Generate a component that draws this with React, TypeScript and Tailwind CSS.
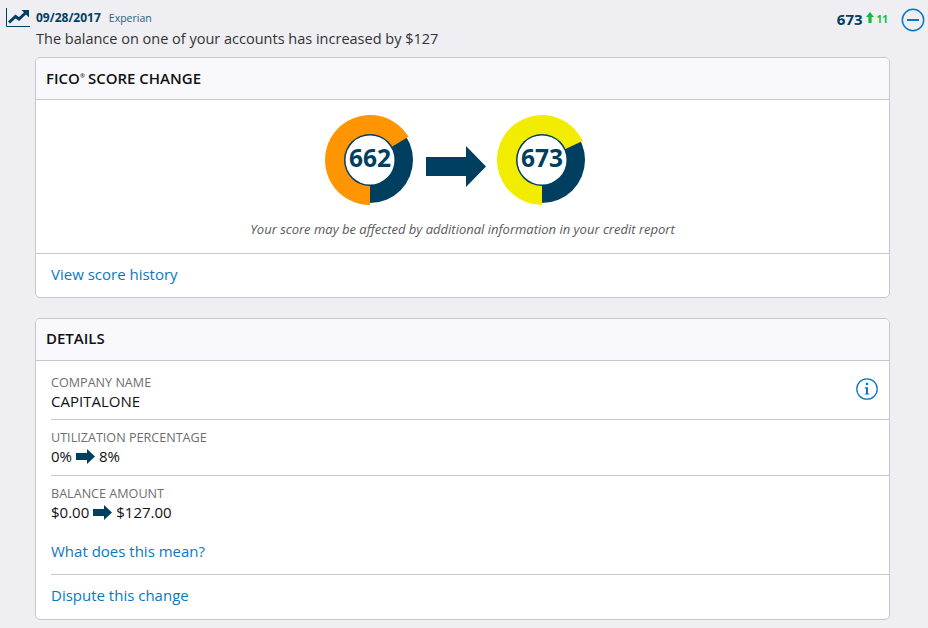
import React from "react";

function Donut({ score, color, angle }: { score: string; color: string; angle: number }) {
  const rad = (angle * Math.PI) / 180;
  const x = 45 + 45 * Math.sin(rad);
  const y = 45 - 45 * Math.cos(rad);
  const nx = 45 + 43 * Math.sin(rad);
  const ny = 45 - 43 * Math.cos(rad);
  return (
    <div className="grid w-[90px] h-[90px]">
      <svg viewBox="0 0 90 90" className="col-start-1 row-start-1 w-[90px] h-[90px]">
        <path d={`M45 45 L45 2 A43 43 0 1 1 45 88 Z`} fill="#003f5f" />
        <path d={`M45 45 L45 90 A45 45 0 1 1 ${x} ${y} L${nx} ${ny} Z`} fill={color} />
        <circle cx="45" cy="45" r="26" fill="#003f5f" />
        <circle cx="45" cy="45" r="24.5" fill="#fff" />
      </svg>
      <div className="col-start-1 row-start-1 flex items-center justify-center pb-[3px] text-[24.5px] font-bold text-[#003f5f] leading-none">
        {score}
      </div>
    </div>
  );
}

function BigArrow() {
  return (
    <svg width="60" height="41" viewBox="0 0 60 41" className="mt-[31px] ml-[-1px] mr-[-1px]">
      <path d="M0 11 H40 V0 L60 20.5 L40 41 V30 H0 Z" fill="#003f5f" />
    </svg>
  );
}

function SmallArrow() {
  return (
    <svg width="19" height="15" viewBox="0 0 19 15" className="mx-[4px]">
      <path d="M0 4 H11 V0 L19 7.5 L11 15 V11 H0 Z" fill="#003f5f" />
    </svg>
  );
}

function Field({ label, children }: { label: string; children: React.ReactNode }) {
  return (
    <div>
      <div className="text-[12.6px] leading-[17px] text-[#6d6e71]">{label}</div>
      <div className="mt-[1px] flex items-center text-[15px] leading-[19px] text-[#111]">{children}</div>
    </div>
  );
}

export default function App() {
  return (
    <div
      className="h-[628px] w-[928px] overflow-hidden bg-[#eeeef3] text-[#222]"
      style={{ fontFamily: '"Open Sans", sans-serif' }}
    >
      <div className="flex justify-between pl-[6px] pr-[3px] pt-[8px]">
        <div className="flex">
          <svg width="25" height="19" viewBox="0 0 25 19">
            <path d="M0.5 0 V18.5 H24" fill="none" stroke="#003f5f" strokeWidth="1" />
            <path d="M3 14.5 L9.5 8.5 L13 11 L20 4.5" fill="none" stroke="#003f5f" strokeWidth="3" />
            <path d="M15.5 2 H23 V9.5 Z" fill="#003f5f" />
          </svg>
          <div className="ml-[5px]">
            <div className="mt-[1px] flex items-baseline text-[#003f5f] leading-[18px]">
              <span className="text-[12px] font-bold">09/28/2017</span>
              <span className="ml-[8px] text-[10.5px] text-[#2b607c]">Experian</span>
            </div>
            <div className="text-[14.5px] leading-[22px] mt-[1px] text-[#333]">
              The balance on one of your accounts has increased by $127
            </div>
          </div>
        </div>
        <div className="flex items-start">
          <span className="mt-[1px] text-[15px] font-bold text-[#003f5f] leading-[20px]">673</span>
          <svg width="8" height="11" viewBox="0 0 8 11" className="ml-[3px] mt-[4px]">
            <path d="M4 0 L8 5 H5.6 V11 H2.4 V5 H0 Z" fill="#0fbf3c" />
          </svg>
          <span className="mt-[1px] ml-[3px] text-[10px] font-bold text-[#0fbf3c] leading-[20px]">11</span>
          <svg width="24" height="24" viewBox="0 0 24 24" className="ml-[13px]">
            <circle cx="12" cy="12" r="10.7" fill="none" stroke="#0a78c2" strokeWidth="1.5" />
            <path d="M6 12 H18" stroke="#0a78c2" strokeWidth="2" />
          </svg>
        </div>
      </div>

      <div className="ml-[35px] mt-[7px] w-[855px]">
        <section className="h-[241px] rounded-[5px] border border-[#c8c8cc] bg-white overflow-hidden">
          <header className="flex h-[42px] items-center border-b border-[#c8c8cc] bg-[#f9f9fd] px-[10px] text-[15px] font-semibold text-[#111]">
            FICO<sup className="text-[6px] mr-[3px] -top-[3px]">®</sup> SCORE CHANGE
          </header>
          <div className="flex items-start justify-center gap-[12px] pt-[15px] pr-[13px]">
            <Donut score="662" color="#ff9500" angle={59} />
            <BigArrow />
            <Donut score="673" color="#f2ec00" angle={65} />
          </div>
          <p className="mt-[14px] text-center text-[13px] italic leading-[20px] text-[#58595b]">
            Your score may be affected by additional information in your credit report
          </p>
          <div className="mt-[14px] border-t border-[#c8c8cc] pt-[8px] pl-[15px]">
            <a className="text-[15px] leading-[22px] text-[#0a78c2]">View score history</a>
          </div>
        </section>

        <section className="mt-[20px] h-[302px] rounded-[5px] border border-[#c8c8cc] bg-white overflow-hidden">
          <header className="flex h-[42px] items-center border-b border-[#c8c8cc] bg-[#f9f9fd] px-[10px] pb-[2px] text-[15px] font-semibold text-[#111]">
            DETAILS
          </header>
          <div className="pl-[15px] pr-0">
            <div className="flex h-[59px] items-start justify-between border-b border-[#c8c8cc] pt-[13px] pr-[10px]">
              <Field label="COMPANY NAME">CAPITALONE</Field>
              <svg width="24" height="24" viewBox="0 0 24 24" className="mt-[3px]">
                <circle cx="12" cy="12" r="10.2" fill="none" stroke="#0a78c2" strokeWidth="1.3" />
                <rect x="10.9" y="5.8" width="2.2" height="2.3" fill="#0a78c2" />
                <path d="M9.8 10.3 H13 V16.5 H14.3 V17.6 H9.8 V16.5 H11 V11.4 H9.8 Z" fill="#0a78c2" />
              </svg>
            </div>
            <div className="h-[56px] border-b border-[#c8c8cc] pt-[9px]">
              <Field label="UTILIZATION PERCENTAGE">
                0%
                <SmallArrow />
                8%
              </Field>
            </div>
            <div className="pt-[9px]">
              <Field label="BALANCE AMOUNT">
                $0.00
                <SmallArrow />
                $127.00
              </Field>
            </div>
            <div className="mt-[18px] text-[15px] leading-[22px] text-[#0a78c2]">What does this mean?</div>
            <div className="mt-[12px] border-t border-[#c8c8cc] pt-[9px] text-[15px] leading-[22px] text-[#0a78c2]">
              Dispute this change
            </div>
          </div>
        </section>
      </div>
    </div>
  );
}
